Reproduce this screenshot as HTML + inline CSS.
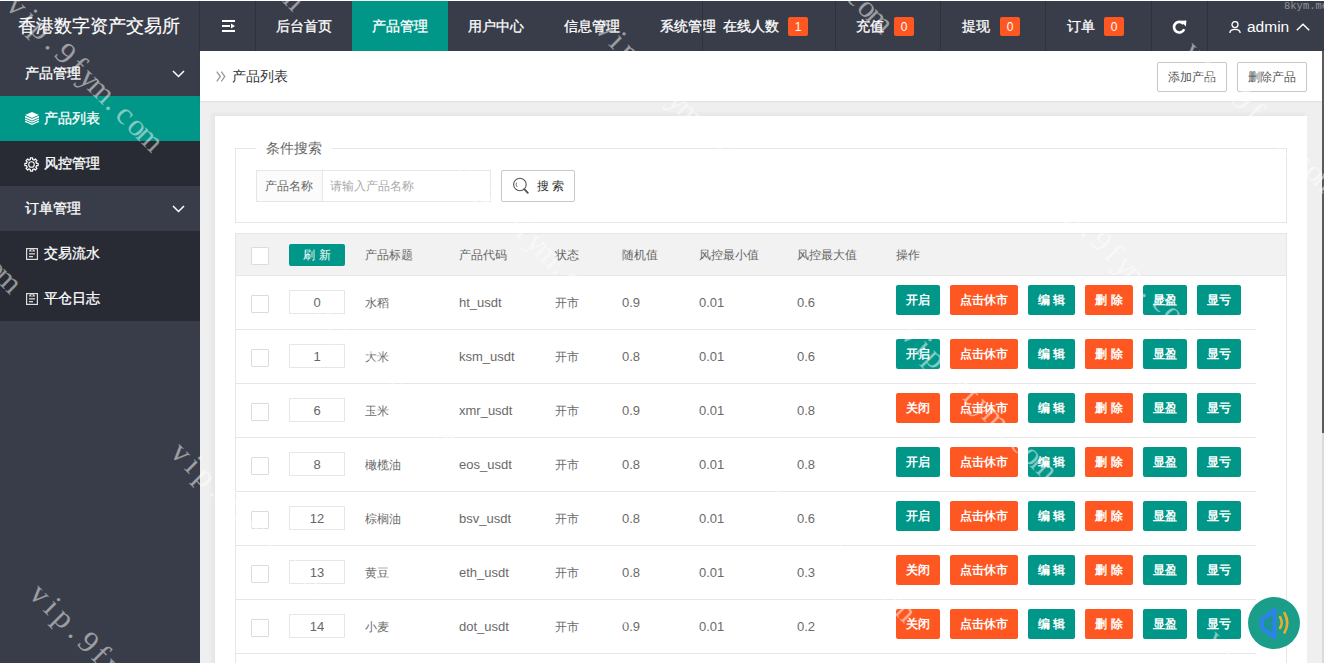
<!DOCTYPE html>
<html><head><meta charset="utf-8">
<style>
*{box-sizing:border-box;margin:0;padding:0}
html,body{width:1324px;height:663px;overflow:hidden;background:#efefef;font-family:"Liberation Sans",sans-serif;}
.abs{position:absolute}
#top{position:absolute;left:0;top:0;width:1324px;height:1px;background:#fff}
#hdr{position:absolute;left:0;top:1px;width:1324px;height:50px;background:#393D49;color:#fff}
.sep{position:absolute;top:0;width:1px;height:50px;background:#2f323c}
.nt{position:absolute;font-size:14px;line-height:16px;top:17px;color:#fff;white-space:nowrap;-webkit-text-stroke:0.3px #fff}
.badge{position:absolute;top:16px;height:19px;width:20px;background:#FF5722;border-radius:2px;color:#fff;font-size:12px;line-height:20px;text-align:center}
#side{position:absolute;left:0;top:51px;width:200px;height:612px;background:#393D49}
.si{position:absolute;left:0;width:200px;height:45px;color:#fff;font-size:14px}
.si span{position:absolute;top:14px;line-height:16px;-webkit-text-stroke:0.3px #fff}
#ch{position:absolute;left:200px;top:51px;width:1122px;height:50px;background:#fff;box-shadow:0 1px 2px rgba(0,0,0,.06)}
#sb{position:absolute;left:1322px;top:51px;width:2px;height:612px;background:#dadada}
#sbt{position:absolute;left:1322px;top:51px;width:2px;height:382px;background:#5a5a5a}
.obtn{position:absolute;top:11px;height:30px;border:1px solid #C9C9C9;border-radius:2px;background:#fff;color:#555;font-size:12px;line-height:28px;text-align:center}
#card{position:absolute;left:215px;top:116px;width:1092px;height:560px;background:#fff;box-shadow:-3px -2px 3px 1px rgba(0,0,0,.035)}
.t12{font-size:12px;line-height:14px;white-space:nowrap}
.hd{position:absolute;top:248px;color:#666}
.cell{position:absolute;color:#6a6a6a}
.cb{position:absolute;left:251px;width:18px;height:18px;border:1px solid #dcdcdc;background:#fff;border-radius:1px}
.inp{position:absolute;left:289px;width:56px;height:24px;border:1px solid #e6e6e6;background:#fff;color:#666;font-size:13px;line-height:24px;text-align:center}
.rl{position:absolute;left:236px;width:1020px;height:1px;background:#e6e6e6}
.btn{position:absolute;height:30px;border-radius:2px;color:#fff;font-size:12px;line-height:30px;text-align:center;font-weight:bold;white-space:nowrap}
.g{background:#009688}.o{background:#FF5722}
</style></head><body>
<div id="top"></div>
<div id="hdr">
  <div class="abs" style="left:18px;top:14px;font-size:18px;line-height:22px;color:#fff;white-space:nowrap;-webkit-text-stroke:0.2px #fff">香港数字资产交易所</div>
  <div class="sep" style="left:199px"></div>
  <div class="sep" style="left:255px"></div>
  <!-- hamburger -->
  <svg class="abs" style="left:222px;top:19px" width="14" height="12" viewBox="0 0 14 12"><rect x="0" y="0" width="13" height="2" fill="#fff"/><rect x="0" y="5" width="8" height="2" fill="#fff"/><path d="M9 3.5 L13 6 L9 8.5Z" fill="#fff"/><rect x="0" y="10" width="13" height="2" fill="#fff"/></svg>
  <div class="nt" style="left:276px">后台首页</div>
  <div class="abs" style="left:352px;top:0;width:96px;height:50px;background:#009688"></div>
  <div class="nt" style="left:372px">产品管理</div>
  <div class="nt" style="left:468px">用户中心</div>
  <div class="nt" style="left:564px">信息管理</div>
  <div class="nt" style="left:660px">系统管理</div>
  <div class="sep" style="left:702px"></div>
  <div class="nt" style="left:723px">在线人数</div>
  <div class="badge" style="left:788px">1</div>
  <div class="sep" style="left:835px"></div>
  <div class="nt" style="left:856px">充值</div>
  <div class="badge" style="left:894px">0</div>
  <div class="sep" style="left:940px"></div>
  <div class="nt" style="left:962px">提现</div>
  <div class="badge" style="left:1000px">0</div>
  <div class="sep" style="left:1045px"></div>
  <div class="nt" style="left:1067px">订单</div>
  <div class="badge" style="left:1104px">0</div>
  <div class="sep" style="left:1151px"></div>
  <div class="sep" style="left:1207px"></div>
  <!-- refresh -->
  <svg class="abs" style="left:1172px;top:19px" width="15" height="14" viewBox="0 0 15 14"><path d="M11.6 4 A5.3 5.3 0 1 0 12.2 9.3" fill="none" stroke="#fff" stroke-width="2.6"/><path d="M8.6 0.8 L14.4 0.6 L13.9 6.4Z" fill="#fff"/></svg>
  <!-- user -->
  <svg class="abs" style="left:1229px;top:20px" width="12" height="12" viewBox="0 0 12 12"><circle cx="6" cy="3.6" r="3" fill="none" stroke="#fff" stroke-width="1.3"/><path d="M0.8 12 C1.2 7.2 10.8 7.2 11.2 12" fill="none" stroke="#fff" stroke-width="1.3"/></svg>
  <div class="abs" style="left:1247px;top:16px;font-size:15.5px;line-height:20px;color:#fff">admin</div>
  <svg class="abs" style="left:1296px;top:22px" width="14" height="8" viewBox="0 0 14 8"><path d="M0.8 7.2 L7 1.2 L13.2 7.2" fill="none" stroke="#fff" stroke-width="1.5"/></svg>
</div>

<div id="side">
  <div class="si" style="top:0"><span style="left:25px">产品管理</span>
    <svg class="abs" style="left:172px;top:19px" width="13" height="8" viewBox="0 0 13 8"><path d="M1 1 L6.5 6.5 L12 1" fill="none" stroke="#fff" stroke-width="1.5"/></svg></div>
  <div class="si" style="top:45px;background:#009688"><span style="left:44px">产品列表</span>
    <svg class="abs" style="left:25px;top:16px" width="14" height="13" viewBox="0 0 14 13"><path d="M7 0 L14 3 L14 10 L7 13 L0 10 L0 3Z" fill="#fff"/><path d="M0 3.3 L7 6.3 L14 3.3 M0 6 L7 9 L14 6 M0 8.2 L7 11.2 L14 8.2" fill="none" stroke="#009688" stroke-width="0.9"/></svg></div>
  <div class="si" style="top:90px;background:#282B33"><span style="left:44px">风控管理</span>
    <svg class="abs" style="left:24px;top:16px" width="15" height="15" viewBox="0 0 15 15"><path d="M6.35 2.53 L6.34 0.90 L8.66 0.90 L8.65 2.53 L10.20 3.17 L11.34 2.01 L12.99 3.66 L11.83 4.80 L12.47 6.35 L14.10 6.34 L14.10 8.66 L12.47 8.65 L11.83 10.20 L12.99 11.34 L11.34 12.99 L10.20 11.83 L8.65 12.47 L8.66 14.10 L6.34 14.10 L6.35 12.47 L4.80 11.83 L3.66 12.99 L2.01 11.34 L3.17 10.20 L2.53 8.65 L0.90 8.66 L0.90 6.34 L2.53 6.35 L3.17 4.80 L2.01 3.66 L3.66 2.01 L4.80 3.17Z" fill="none" stroke="#fff" stroke-width="1.2" stroke-linejoin="round"/><circle cx="7.5" cy="7.5" r="2.8" fill="none" stroke="#fff" stroke-width="1.1"/></svg></div>
  <div class="si" style="top:135px"><span style="left:25px">订单管理</span>
    <svg class="abs" style="left:172px;top:19px" width="13" height="8" viewBox="0 0 13 8"><path d="M1 1 L6.5 6.5 L12 1" fill="none" stroke="#fff" stroke-width="1.5"/></svg></div>
  <div class="si" style="top:180px;background:#282B33"><span style="left:44px">交易流水</span>
    <svg class="abs" style="left:26px;top:17px" width="12" height="12" viewBox="0 0 12 12"><rect x="0.6" y="0.6" width="10.8" height="10.8" fill="none" stroke="#ddd" stroke-width="1.2"/><path d="M3 3.4 Q3 0.9 6 0.9 Q9 0.9 9 3.4Z" fill="#ddd"/><circle cx="6" cy="2.4" r="0.8" fill="#282B33"/><path d="M3 5.9 H9 M3 8.6 H7" stroke="#ddd" stroke-width="1.2"/></svg></div>
  <div class="si" style="top:225px;background:#282B33"><span style="left:44px">平仓日志</span>
    <svg class="abs" style="left:26px;top:17px" width="12" height="12" viewBox="0 0 12 12"><rect x="0.6" y="0.6" width="10.8" height="10.8" fill="none" stroke="#ddd" stroke-width="1.2"/><path d="M3 3.4 Q3 0.9 6 0.9 Q9 0.9 9 3.4Z" fill="#ddd"/><circle cx="6" cy="2.4" r="0.8" fill="#282B33"/><path d="M3 5.9 H9 M3 8.6 H7" stroke="#ddd" stroke-width="1.2"/></svg></div>
</div>

<div id="ch">
  <svg class="abs" style="left:16px;top:20px" width="10" height="11" viewBox="0 0 10 11"><path d="M0.8 0.6 L4.3 5.5 L0.8 10.4 M5.3 0.6 L8.8 5.5 L5.3 10.4" fill="none" stroke="#999" stroke-width="1.3"/></svg>
  <div class="abs" style="left:32px;top:17px;color:#333;font-size:14px;line-height:16px">产品列表</div>
  <div class="obtn" style="left:957px;width:70px">添加产品</div>
  <div class="obtn" style="left:1037px;width:70px">删除产品</div>
</div>
<div id="sb"></div><div id="sbt"></div>

<div id="card"></div>
<!-- fieldset -->
<div class="abs" style="left:235px;top:148px;width:1052px;height:75px;border:1px solid #e6e6e6"></div>
<div class="abs t12" style="left:256px;top:139px;width:76px;height:18px;background:#fff;padding-left:10px;color:#666;font-size:14px;line-height:18px">条件搜索</div>
<div class="abs" style="left:256px;top:170px;width:67px;height:32px;border:1px solid #e6e6e6;background:#fbfbfb"></div>
<div class="abs t12" style="left:265px;top:179px;color:#666">产品名称</div>
<div class="abs" style="left:322px;top:170px;width:169px;height:32px;border:1px solid #e6e6e6;background:#fff"></div>
<div class="abs t12" style="left:330px;top:179px;color:#aaa">请输入产品名称</div>
<div class="abs" style="left:501px;top:170px;width:74px;height:32px;border:1px solid #C9C9C9;border-radius:2px;background:#fff"></div>
<svg class="abs" style="left:512px;top:177px" width="18" height="18" viewBox="0 0 18 18"><circle cx="7.9" cy="7.5" r="6.3" fill="none" stroke="#555" stroke-width="1.1"/><path d="M12.3 12.2 L15.8 15.8" stroke="#555" stroke-width="1.9" stroke-linecap="round"/><path d="M4.6 5.6 A3.6 3.6 0 0 0 5.2 10" fill="none" stroke="#666" stroke-width="0.9"/></svg>
<div class="abs t12" style="left:537px;top:179px;color:#333">搜&nbsp;索</div>

<!-- table -->
<div class="abs" style="left:235px;top:233px;width:1052px;height:440px;border:1px solid #e6e6e6;border-bottom:none;background:#fff"></div>
<div class="abs" style="left:236px;top:234px;width:1050px;height:41px;background:#f2f2f2"></div>
<div class="rl" style="top:275px;width:1050px"></div>
<div class="cb" style="top:247px"></div>
<div class="btn g" style="left:289px;top:244px;width:56px;height:22px;line-height:22px;font-weight:normal">刷&nbsp;新</div>
<div class="hd t12" style="left:365px">产品标题</div>
<div class="hd t12" style="left:459px">产品代码</div>
<div class="hd t12" style="left:555px">状态</div>
<div class="hd t12" style="left:622px">随机值</div>
<div class="hd t12" style="left:699px">风控最小值</div>
<div class="hd t12" style="left:797px">风控最大值</div>
<div class="hd t12" style="left:896px">操作</div>
<div id="rows">
<div class="cb" style="top:295px"></div>
<div class="inp" style="top:290px">0</div>
<div class="cell t12" style="left:365px;top:296px">水稻</div>
<div class="cell t12" style="left:459px;top:296px;font-size:13px">ht_usdt</div>
<div class="cell t12" style="left:555px;top:296px">开市</div>
<div class="cell t12" style="left:622px;top:296px;font-size:13px">0.9</div>
<div class="cell t12" style="left:699px;top:296px;font-size:13px">0.01</div>
<div class="cell t12" style="left:797px;top:296px;font-size:13px">0.6</div>
<div class="btn g" style="left:896px;top:285px;width:44px">开启</div>
<div class="btn o" style="left:950px;top:285px;width:68px">点击休市</div>
<div class="btn g" style="left:1028px;top:285px;width:47px">编&nbsp;辑</div>
<div class="btn o" style="left:1085px;top:285px;width:48px">删&nbsp;除</div>
<div class="btn g" style="left:1143px;top:285px;width:44px">显盈</div>
<div class="btn g" style="left:1197px;top:285px;width:44px">显亏</div>
<div class="rl" style="top:329px"></div>
<div class="cb" style="top:349px"></div>
<div class="inp" style="top:344px">1</div>
<div class="cell t12" style="left:365px;top:350px">大米</div>
<div class="cell t12" style="left:459px;top:350px;font-size:13px">ksm_usdt</div>
<div class="cell t12" style="left:555px;top:350px">开市</div>
<div class="cell t12" style="left:622px;top:350px;font-size:13px">0.8</div>
<div class="cell t12" style="left:699px;top:350px;font-size:13px">0.01</div>
<div class="cell t12" style="left:797px;top:350px;font-size:13px">0.6</div>
<div class="btn g" style="left:896px;top:339px;width:44px">开启</div>
<div class="btn o" style="left:950px;top:339px;width:68px">点击休市</div>
<div class="btn g" style="left:1028px;top:339px;width:47px">编&nbsp;辑</div>
<div class="btn o" style="left:1085px;top:339px;width:48px">删&nbsp;除</div>
<div class="btn g" style="left:1143px;top:339px;width:44px">显盈</div>
<div class="btn g" style="left:1197px;top:339px;width:44px">显亏</div>
<div class="rl" style="top:383px"></div>
<div class="cb" style="top:403px"></div>
<div class="inp" style="top:398px">6</div>
<div class="cell t12" style="left:365px;top:404px">玉米</div>
<div class="cell t12" style="left:459px;top:404px;font-size:13px">xmr_usdt</div>
<div class="cell t12" style="left:555px;top:404px">开市</div>
<div class="cell t12" style="left:622px;top:404px;font-size:13px">0.9</div>
<div class="cell t12" style="left:699px;top:404px;font-size:13px">0.01</div>
<div class="cell t12" style="left:797px;top:404px;font-size:13px">0.8</div>
<div class="btn o" style="left:896px;top:393px;width:44px">关闭</div>
<div class="btn o" style="left:950px;top:393px;width:68px">点击休市</div>
<div class="btn g" style="left:1028px;top:393px;width:47px">编&nbsp;辑</div>
<div class="btn o" style="left:1085px;top:393px;width:48px">删&nbsp;除</div>
<div class="btn g" style="left:1143px;top:393px;width:44px">显盈</div>
<div class="btn g" style="left:1197px;top:393px;width:44px">显亏</div>
<div class="rl" style="top:437px"></div>
<div class="cb" style="top:457px"></div>
<div class="inp" style="top:452px">8</div>
<div class="cell t12" style="left:365px;top:458px">橄榄油</div>
<div class="cell t12" style="left:459px;top:458px;font-size:13px">eos_usdt</div>
<div class="cell t12" style="left:555px;top:458px">开市</div>
<div class="cell t12" style="left:622px;top:458px;font-size:13px">0.8</div>
<div class="cell t12" style="left:699px;top:458px;font-size:13px">0.01</div>
<div class="cell t12" style="left:797px;top:458px;font-size:13px">0.8</div>
<div class="btn g" style="left:896px;top:447px;width:44px">开启</div>
<div class="btn o" style="left:950px;top:447px;width:68px">点击休市</div>
<div class="btn g" style="left:1028px;top:447px;width:47px">编&nbsp;辑</div>
<div class="btn o" style="left:1085px;top:447px;width:48px">删&nbsp;除</div>
<div class="btn g" style="left:1143px;top:447px;width:44px">显盈</div>
<div class="btn g" style="left:1197px;top:447px;width:44px">显亏</div>
<div class="rl" style="top:491px"></div>
<div class="cb" style="top:511px"></div>
<div class="inp" style="top:506px">12</div>
<div class="cell t12" style="left:365px;top:512px">棕榈油</div>
<div class="cell t12" style="left:459px;top:512px;font-size:13px">bsv_usdt</div>
<div class="cell t12" style="left:555px;top:512px">开市</div>
<div class="cell t12" style="left:622px;top:512px;font-size:13px">0.8</div>
<div class="cell t12" style="left:699px;top:512px;font-size:13px">0.01</div>
<div class="cell t12" style="left:797px;top:512px;font-size:13px">0.6</div>
<div class="btn g" style="left:896px;top:501px;width:44px">开启</div>
<div class="btn o" style="left:950px;top:501px;width:68px">点击休市</div>
<div class="btn g" style="left:1028px;top:501px;width:47px">编&nbsp;辑</div>
<div class="btn o" style="left:1085px;top:501px;width:48px">删&nbsp;除</div>
<div class="btn g" style="left:1143px;top:501px;width:44px">显盈</div>
<div class="btn g" style="left:1197px;top:501px;width:44px">显亏</div>
<div class="rl" style="top:545px"></div>
<div class="cb" style="top:565px"></div>
<div class="inp" style="top:560px">13</div>
<div class="cell t12" style="left:365px;top:566px">黄豆</div>
<div class="cell t12" style="left:459px;top:566px;font-size:13px">eth_usdt</div>
<div class="cell t12" style="left:555px;top:566px">开市</div>
<div class="cell t12" style="left:622px;top:566px;font-size:13px">0.8</div>
<div class="cell t12" style="left:699px;top:566px;font-size:13px">0.01</div>
<div class="cell t12" style="left:797px;top:566px;font-size:13px">0.3</div>
<div class="btn o" style="left:896px;top:555px;width:44px">关闭</div>
<div class="btn o" style="left:950px;top:555px;width:68px">点击休市</div>
<div class="btn g" style="left:1028px;top:555px;width:47px">编&nbsp;辑</div>
<div class="btn o" style="left:1085px;top:555px;width:48px">删&nbsp;除</div>
<div class="btn g" style="left:1143px;top:555px;width:44px">显盈</div>
<div class="btn g" style="left:1197px;top:555px;width:44px">显亏</div>
<div class="rl" style="top:599px"></div>
<div class="cb" style="top:619px"></div>
<div class="inp" style="top:614px">14</div>
<div class="cell t12" style="left:365px;top:620px">小麦</div>
<div class="cell t12" style="left:459px;top:620px;font-size:13px">dot_usdt</div>
<div class="cell t12" style="left:555px;top:620px">开市</div>
<div class="cell t12" style="left:622px;top:620px;font-size:13px">0.9</div>
<div class="cell t12" style="left:699px;top:620px;font-size:13px">0.01</div>
<div class="cell t12" style="left:797px;top:620px;font-size:13px">0.2</div>
<div class="btn o" style="left:896px;top:609px;width:44px">关闭</div>
<div class="btn o" style="left:950px;top:609px;width:68px">点击休市</div>
<div class="btn g" style="left:1028px;top:609px;width:47px">编&nbsp;辑</div>
<div class="btn o" style="left:1085px;top:609px;width:48px">删&nbsp;除</div>
<div class="btn g" style="left:1143px;top:609px;width:44px">显盈</div>
<div class="btn g" style="left:1197px;top:609px;width:44px">显亏</div>
<div class="rl" style="top:653px"></div>
</div>
<!-- sound button -->
<svg class="abs" style="left:1248px;top:597px" width="52" height="52" viewBox="0 0 52 52"><circle cx="26" cy="26" r="26" fill="#1a9e8a"/><path d="M26.5 13 Q22 16 19 19 Q13 21 13.5 26.5 Q13 32 19 34 Q22 37 26.5 40 Z" fill="#1b9590" stroke="#2f82ec" stroke-width="4" stroke-linejoin="round"/><path d="M32 20 Q35.5 25.5 32 31" fill="none" stroke="#eaae2e" stroke-width="2.6" stroke-linecap="round"/><path d="M36.5 16 Q42 26 36.5 35.5" fill="none" stroke="#eaae2e" stroke-width="2.6" stroke-linecap="round"/></svg>
<svg id="wm" style="position:absolute;left:0;top:0;pointer-events:none" width="1324" height="663" viewBox="0 0 1324 663"><g font-family="Liberation Serif" font-size="31" fill="rgba(255,255,255,0.5)">
<text x="35.6 52.7 69.8 86.9 104.0 121.1 138.2 155.3 172.4 189.5 206.6 223.7" y="595.0" text-anchor="middle" transform="rotate(45 27.1 595.0)">vip.9fym.com</text>
<text x="-128.8 -111.7 -94.6 -77.5 -60.4 -43.3 -26.2 -9.1 8.0 25.1 42.2 59.3" y="147.7" text-anchor="middle" transform="rotate(45 -137.3 147.7)">vip.9fym.com</text>
<text x="177.1 194.2 211.3 228.4 245.5 262.6 279.7 296.8 313.9 331.0 348.1 365.2" y="453.5" text-anchor="middle" transform="rotate(45 168.5 453.5)">vip.9fym.com</text>
<text x="12.7 29.8 46.9 64.0 81.0 98.2 115.2 132.3 149.5 166.6 183.7 200.8" y="6.3" text-anchor="middle" transform="rotate(45 4.1 6.3)">vip.9fym.com</text>
<text x="318.5 335.6 352.7 369.8 386.9 404.0 421.1 438.2 455.3 472.4 489.5 506.6" y="312.1" text-anchor="middle" transform="rotate(45 309.9 312.1)">vip.9fym.com</text>
<text x="624.3 641.4 658.5 675.6 692.7 709.8 726.9 744.0 761.1 778.2 795.3 812.4" y="617.9" text-anchor="middle" transform="rotate(45 615.7 617.9)">vip.9fym.com</text>
<text x="154.1 171.2 188.3 205.4 222.5 239.6 256.7 273.8 290.9 308.0 325.1 342.2" y="-135.1" text-anchor="middle" transform="rotate(45 145.5 -135.1)">vip.9fym.com</text>
<text x="459.9 477.0 494.1 511.2 528.3 545.4 562.5 579.6 596.7 613.8 630.9 648.0" y="170.7" text-anchor="middle" transform="rotate(45 451.3 170.7)">vip.9fym.com</text>
<text x="765.7 782.8 799.9 817.0 834.1 851.2 868.3 885.4 902.5 919.6 936.7 953.8" y="476.5" text-anchor="middle" transform="rotate(45 757.2 476.5)">vip.9fym.com</text>
<text x="601.3 618.4 635.5 652.6 669.7 686.8 703.9 721.0 738.1 755.2 772.3 789.4" y="29.3" text-anchor="middle" transform="rotate(45 592.8 29.3)">vip.9fym.com</text>
<text x="907.1 924.2 941.3 958.4 975.5 992.6 1009.7 1026.8 1043.9 1061.0 1078.1 1095.2" y="335.1" text-anchor="middle" transform="rotate(45 898.6 335.1)">vip.9fym.com</text>
<text x="1213.0 1230.1 1247.2 1264.3 1281.4 1298.5 1315.6 1332.7 1349.8 1366.9 1384.0 1401.1" y="640.9" text-anchor="middle" transform="rotate(45 1204.4 640.9)">vip.9fym.com</text>
<text x="742.7 759.8 776.9 794.0 811.1 828.2 845.3 862.4 879.5 896.6 913.7 930.8" y="-112.1" text-anchor="middle" transform="rotate(45 734.2 -112.1)">vip.9fym.com</text>
<text x="1048.6 1065.7 1082.8 1099.9 1117.0 1134.1 1151.2 1168.3 1185.4 1202.5 1219.6 1236.7" y="193.7" text-anchor="middle" transform="rotate(45 1040.0 193.7)">vip.9fym.com</text>
<text x="1354.4 1371.5 1388.6 1405.7 1422.8 1439.9 1457.0 1474.1 1491.2 1508.3 1525.4 1542.5" y="499.5" text-anchor="middle" transform="rotate(45 1345.8 499.5)">vip.9fym.com</text>
<text x="1190.0 1207.1 1224.2 1241.3 1258.4 1275.5 1292.6 1309.7 1326.8 1343.9 1361.0 1378.1" y="52.3" text-anchor="middle" transform="rotate(45 1181.4 52.3)">vip.9fym.com</text>
<text x="1331.4 1348.5 1365.6 1382.7 1399.8 1416.9 1434.0 1451.1 1468.2 1485.3 1502.4 1519.5" y="-89.2" text-anchor="middle" transform="rotate(45 1322.9 -89.2)">vip.9fym.com</text>
</g><text x="1284" y="9" font-family="Liberation Mono" font-size="10.5" fill="rgba(255,255,255,0.45)">8kym.me</text></svg>
</body></html>
